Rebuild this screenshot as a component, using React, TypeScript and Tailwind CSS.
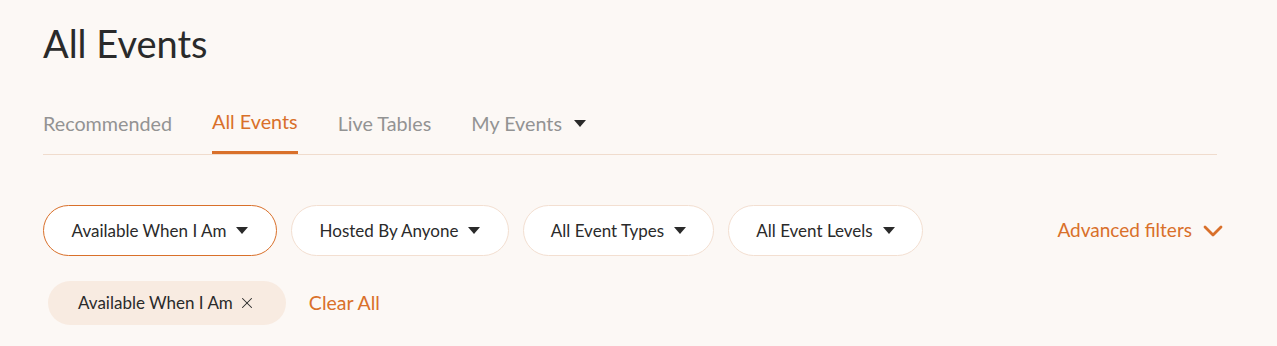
import { X } from "lucide-react";

const tabs = ["Recommended", "All Events", "Live Tables", "My Events"];
const filters = [
  { label: "Available When I Am", active: true, w: "w-[234px]" },
  { label: "Hosted By Anyone", active: false, w: "w-[218px]" },
  { label: "All Event Types", active: false, w: "w-[191px]" },
  { label: "All Event Levels", active: false, w: "w-[195px]" },
];

function Caret() {
  return (
    <svg width="12" height="7" viewBox="0 0 12 7" className="shrink-0">
      <path d="M0 0h12L6 7z" fill="#2a2a2a" />
    </svg>
  );
}

export default function App() {
  return (
    <div className="min-h-[346px] bg-[#fcf8f5] px-[43px] pt-[20px] font-['Lato',sans-serif] text-[#2a2a2a]">
      <h1 className="text-[38px] leading-[46px]">All Events</h1>

      <nav className="mt-[44px] flex w-[1174px] gap-[40px] border-b border-[#f0dccd]">
        {tabs.map((tab) => {
          const active = tab === "All Events";
          return (
            <div
              key={tab}
              className={`flex items-center gap-[12px] pb-[17px] text-[19.75px] leading-[24px] ${
                active ? "border-b-[3px] border-[#d9702a] pb-[14px] text-[#d9702a]" : "text-[#939393]"
              }`}
            >
              {tab}
              {tab === "My Events" && <Caret />}
            </div>
          );
        })}
      </nav>

      <div className="mt-[50px] flex w-[1180px] items-center">
        <div className="flex gap-[14px]">
          {filters.map((f) => (
            <button
              key={f.label}
              className={`flex h-[51px] ${f.w} items-center justify-center gap-[10px] rounded-full border bg-white text-[17px] ${
                f.active ? "border-[#d9702a]" : "border-[#f3dfd1]"
              }`}
            >
              {f.label}
              <Caret />
            </button>
          ))}
        </div>
        <button className="ml-auto flex items-center gap-[11px] text-[19px] text-[#d9702a]">
          Advanced filters
          <svg width="20" height="12" viewBox="0 0 20 12" className="shrink-0">
            <path d="M2 2l8 8 8-8" fill="none" stroke="#d9702a" strokeWidth="2.8" strokeLinecap="round" strokeLinejoin="round" />
          </svg>
        </button>
      </div>

      <div className="mt-[25px] flex items-center gap-[23px] pl-[5px]">
        <div className="flex h-[44px] items-center gap-[5px] rounded-full bg-[#f8ebe1] pl-[30px] pr-[30px] text-[17px]">
          Available When I Am
          <X className="h-[18px] w-[18px]" strokeWidth={1.4} />
        </div>
        <button className="text-[19.5px] text-[#d9702a]">Clear All</button>
      </div>
    </div>
  );
}
